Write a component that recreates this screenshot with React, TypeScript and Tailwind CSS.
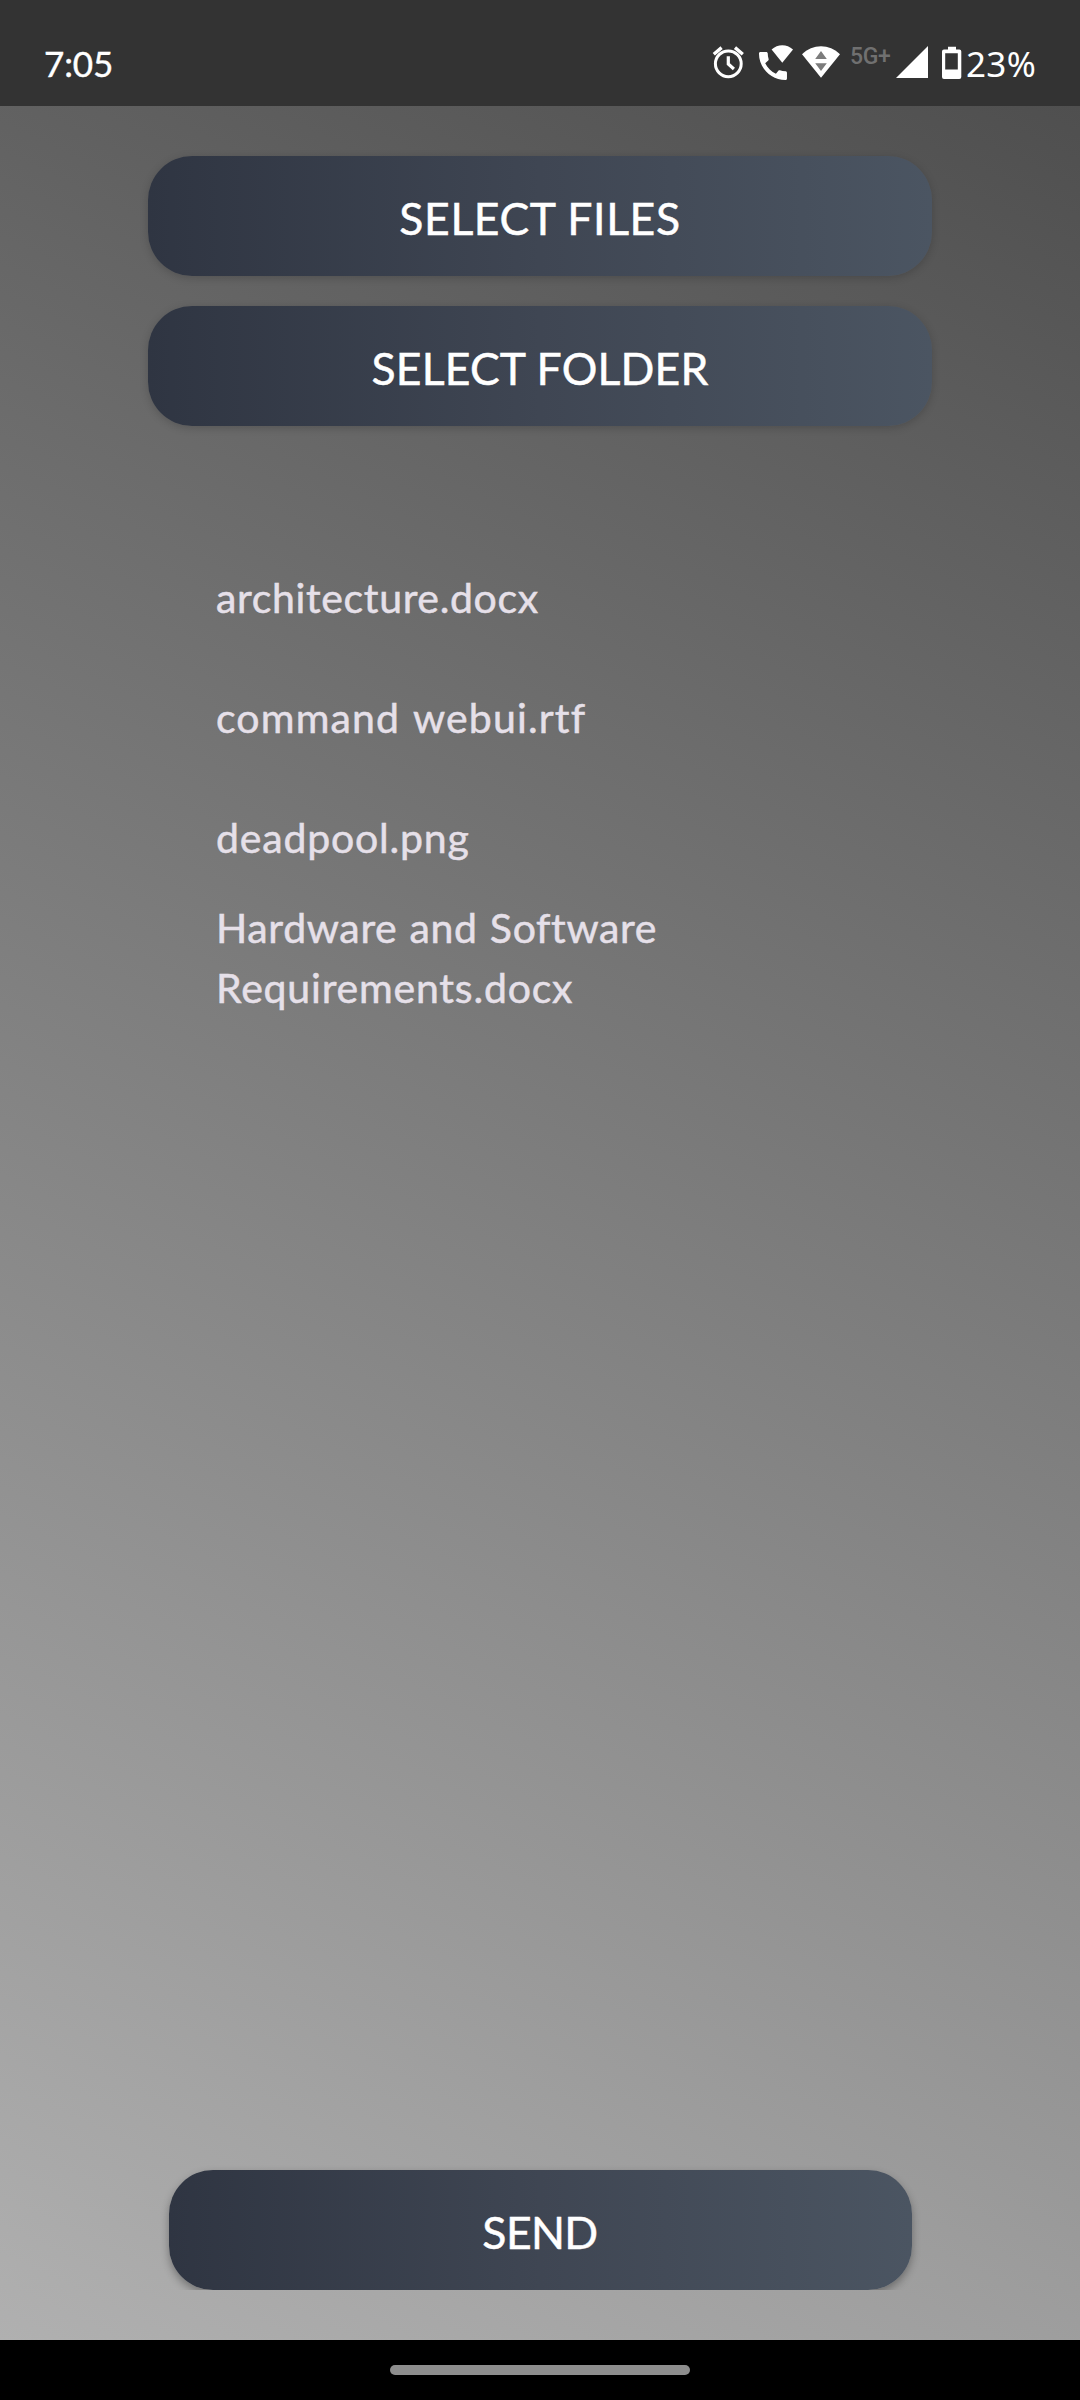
const files = [
  { name: "architecture.docx", className: "tracking-[0.65px]" },
  { name: "command webui.rtf", className: "tracking-[1.15px] [word-spacing:2px]" },
  { name: "deadpool.png", className: "tracking-[0.8px]" },
];

function NotificationIcons() {
  return (
    <svg className="block h-[50px] w-[140px] shrink-0" viewBox="710 38 140 50" fill="#fff">
      {/* alarm clock */}
      <circle cx="728.3" cy="63.8" r="12.9" fill="none" stroke="#fff" strokeWidth="3" />
      <path d="M728.3 56.3v7.7l5.6 5" fill="none" stroke="#fff" strokeWidth="3.2" />
      <path d="M713.8 54.2l7.8-6.6M742.8 54.2l-7.8-6.6" fill="none" stroke="#fff" strokeWidth="3.4" />
      {/* wifi calling */}
      <path
        transform="translate(754.3 47.3) scale(1.556)"
        d="M20.01 15.38c-1.23 0-2.42-.2-3.53-.56-.35-.12-.74-.03-1.01.24l-1.57 1.97c-2.83-1.35-5.48-3.9-6.89-6.83l1.95-1.66c.27-.28.35-.67.24-1.02-.37-1.11-.56-2.3-.56-3.53 0-.54-.45-.99-.99-.99H4.19C3.65 3 3 3.24 3 3.99 3 13.28 10.73 21 20.01 21c.71 0 .99-.63.99-1.18v-3.45c0-.54-.45-.99-.99-.99z"
      />
      <path d="M782.3 62.7L771.6 49.6C777.6 43.8 787 43.8 793 49.6z" />
      {/* wifi */}
      <path d="M821 77.8L802 54.3C812.5 43.4 829.5 43.4 840 54.3z" />
      <path d="M821 51l5.8 8h-11.6zM821 71l5.8-7.7h-11.6z" fill="#7c7c7c" />
    </svg>
  );
}

function SignalAndBattery() {
  return (
    <svg className="block h-[50px] w-[71px] shrink-0" viewBox="894 38 71 50" fill="#fff">
      <path d="M896 78L928 46V78z" />
      <path
        fillRule="evenodd"
        d="M948 46.7h8v2.8h3.3a2 2 0 0 1 2 2V77a2 2 0 0 1-2 2h-15.3a2 2 0 0 1-2-2V51.5a2 2 0 0 1 2-2h4zM945.2 53.2v16.2h12.6V53.2z"
      />
    </svg>
  );
}

function GradientButton({ label, className }: { label: string; className: string }) {
  return (
    <button
      className={`flex h-[120px] shrink-0 items-center justify-center rounded-[44px] bg-linear-to-r from-[#2f3542] via-[#3f4653] to-[#4b5562] pt-[3px] text-[44.5px] leading-[60px] text-white [-webkit-text-stroke:0.5px_#fff] ${className}`}
    >
      {label}
    </button>
  );
}

export default function App() {
  return (
    <div className="flex h-[2400px] w-[1080px] flex-col overflow-hidden bg-black font-['Lato',sans-serif]">
      <header className="flex h-[106px] shrink-0 bg-[#333333] text-white">
        <span className="mt-[38px] ml-[44px] text-[35px] leading-[50px] tracking-[-0.1px] [-webkit-text-stroke:0.4px_#fff]">
          7:05
        </span>
        <div className="mt-[38px] ml-auto flex h-[50px] w-[370px]">
          <NotificationIcons />
          <span className="w-[44px] shrink-0 font-['Roboto',sans-serif] text-[23px] leading-[37px] font-medium tracking-[-0.4px] text-[#707070]">
            5G+
          </span>
          <SignalAndBattery />
          <span className="pl-px font-['Noto_Sans',sans-serif] text-[35px] leading-[51px] tracking-[0.3px]">23%</span>
        </div>
      </header>

      <main className="flex h-[2234px] shrink-0 flex-col items-center bg-[linear-gradient(205.8deg,#4f4f4f,#b0b0b0)] pt-[50px] pb-[50px]">
        <GradientButton
          label="SELECT FILES"
          className="w-[784px] tracking-[0.6px] shadow-[0_2px_8px_rgba(0,0,0,0.18)]"
        />
        <GradientButton
          label="SELECT FOLDER"
          className="mt-[30px] w-[784px] tracking-[0.2px] shadow-[0_2px_8px_rgba(0,0,0,0.18)]"
        />

        <ul className="mt-[112px] w-[648px] text-[41px] leading-[60px] text-[#e6e0e9] [-webkit-text-stroke:0.5px_#e6e0e9]">
          {files.map((file) => (
            <li key={file.name} className={`flex h-[120px] items-center ${file.className}`}>
              {file.name}
            </li>
          ))}
          <li className="flex h-[120px] flex-col justify-center">
            <span className="tracking-[0.65px] [word-spacing:1px]">Hardware and Software</span>
            <span className="tracking-[0.8px]">Requirements.docx</span>
          </li>
        </ul>

        <div className="mt-auto flex h-[130px] w-full items-end justify-center overflow-hidden">
          <GradientButton label="SEND" className="w-[743px] tracking-[-0.6px] shadow-[0_4px_9px_rgba(0,0,0,0.32)]" />
        </div>
      </main>

      <footer className="flex h-[60px] shrink-0 items-center justify-center bg-black">
        <div className="h-[10px] w-[300px] rounded-full bg-[#8e8e8e]" />
      </footer>
    </div>
  );
}
